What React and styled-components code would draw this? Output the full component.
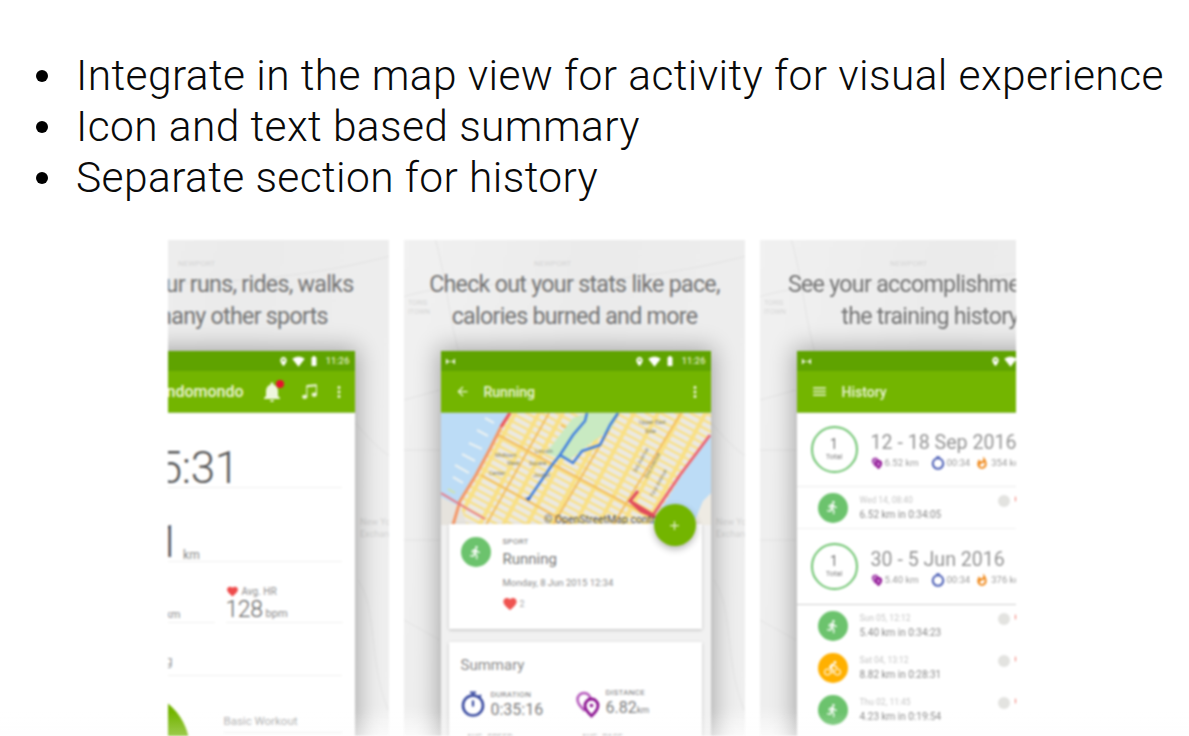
import React from 'react';
import styled, { createGlobalStyle } from 'styled-components';
import {
  MdLocationOn, MdSignalWifi4Bar, MdBatteryFull, MdNotifications, MdMoreVert, MdArrowBack,
  MdMenu, MdAdd, MdFavorite, MdDirectionsRun, MdDirectionsBike, MdWhatshot,
} from 'react-icons/md';
import { BsMusicNoteBeamed } from 'react-icons/bs';

const Global = createGlobalStyle`
  html, body { margin: 0; padding: 0; background: #fff; }
  body { font-family: Roboto, "Liberation Sans", sans-serif; }
`;

const Page = styled.div`
  position: relative; width: 1189px; height: 736px; overflow: hidden; background: #fff;
`;
const Bullets = styled.ul`
  list-style: none; margin: 0; padding: 50px 0 0 36px;
  font: 300 42.5px/51px Roboto, "Liberation Sans", sans-serif; color: #0a0a0a;
`;
const Bullet = styled.li`
  display: flex; align-items: center; gap: 28px; white-space: nowrap; letter-spacing: 0.4px; height: 51px;
  &::before { content: ''; width: 12px; height: 12px; border-radius: 50%; background: #000; flex: none; }
`;
const Strip = styled.div`
  width: 848px; height: 496px; margin: 37px 0 0 168px; overflow: hidden; filter: blur(0.9px);
`;
const Shots = styled.div`
  display: flex; gap: 15px; margin-left: -120px; width: 1200px; height: 100%;
`;
const Shot = styled.section`
  position: relative; flex: none; width: 341px; height: 100%; display: flex; flex-direction: column;
  align-items: center; overflow: hidden;
  background:
    linear-gradient(to top, #fafafa 0, rgba(250,250,250,0) 30px),
    linear-gradient(100deg, #f1f1f1 0%, #ebebeb 45%, #efefef 100%);
`;
const Backdrop = styled.svg`
  position: absolute; inset: 0; width: 100%; height: 100%;
`;
const Caption = styled.h2`
  position: relative; margin: 28px 0 0; font: 400 24.5px/32px Roboto, sans-serif; letter-spacing: -0.75px;
  color: #737373; text-align: center; white-space: nowrap; transform: scaleX(.947);
`;
const Phone = styled.div`
  position: relative; flex: none; width: 270px; height: 400px; margin: 19px 0 0 2px; display: flex; flex-direction: column;
  overflow: hidden; background: ${p => p.$bg || '#fff'}; box-shadow: 0 0 22px 3px rgba(0,0,0,.3);
`;
const StatusBar = styled.div`
  flex: none; height: 20px; display: flex; align-items: center; padding: 0 5px; gap: 3px;
  background: #5fa300; color: #fff; font: 500 9px/1 Roboto, sans-serif; letter-spacing: .2px;
`;
const StatusGap = styled.span`flex: 1;`;
const StatusTime = styled.span`margin-left: 3px; color: #e3f0c9;`;
const AppBar = styled.div`
  flex: none; height: 42px; display: flex; align-items: center; background: #73b500;
  border-bottom: 1px solid #8fbc50; box-sizing: border-box; padding: 0 7px 0 ${p => p.$pad || 14}px; gap: ${p => p.$gap || 14}px;
  font: 500 14px/1 Roboto, sans-serif; color: #eef6dd;
`;
const BarTitle = styled.span`flex: 1; white-space: nowrap; font-size: ${p => p.$size || 14}px; margin-left: ${p => p.$ml || 0}px;`;
const Bell = styled.span`position: relative; display: flex; margin-right: 5px;`;
const BellDot = styled.i`
  position: absolute; top: 0; right: 0; width: 8px; height: 8px; border-radius: 50%; background: #e8112d;
`;

/* first phone */
const Row = styled.div`
  flex: none; box-sizing: border-box; height: ${p => p.$h}px; margin-right: 13px; display: flex; align-items: flex-end;
  border-bottom: 1px solid #f1f1ef; padding-left: ${p => p.$pl || 0}px; color: #6f6f6f; white-space: nowrap;
`;
const Big = styled.span`font: 300 44px/38px Roboto, sans-serif; letter-spacing: -.3px; color: #555;`;
const Unit = styled.span`font: 400 12px/12px Roboto, sans-serif; margin-left: 3px; color: #888;`;
const Cols = styled.div`
  flex: none; box-sizing: border-box; display: grid; grid-template-columns: 130px 117px; column-gap: 11px; height: 61px; margin-right: 13px;
`;
const Col = styled.div`
  display: flex; flex-direction: column; justify-content: flex-end; align-items: ${p => p.$end ? 'flex-end' : 'flex-start'};
  border-bottom: 1px solid #f1f1ef; padding-right: ${p => p.$end ? 34 : 0}px; color: #777; white-space: nowrap;
`;
const HrLabel = styled.div`display: flex; align-items: center; gap: 3px; font: 400 10px/12px Roboto, sans-serif; color: #8c8c8c;`;
const HrValue = styled.div`font: 300 23px/24px Roboto, sans-serif; letter-spacing: -.4px; color: #666; display:flex; align-items:baseline; gap:3px;`;
const Small = styled.span`font: 400 11px/14px Roboto, sans-serif; letter-spacing: 0; color: #888;`;
const TextRow = styled.div`
  flex: none; box-sizing: border-box; height: 53px; margin-right: 13px; border-bottom: 1px solid #f1f1ef;
  display: flex; align-items: flex-end; padding-bottom: 6px; color: #999; font: 400 13px/16px Roboto, sans-serif;
`;
const RightAlign = styled.span`width: 88px; text-align: right;`;
const GaugeRow = styled.div`flex: none; display: flex; gap: 34px; margin-left: -15px; padding-top: 14px;`;
const Gauge = styled.div`flex: none; width: 120px; height: 120px; border-radius: 50%; background: #73b500;`;
const Workout = styled.div`
  flex: 1; height: 30px; margin: 13px 13px 0 0; box-sizing: border-box; padding-top: 10px;
  border-bottom: 1px solid #eee; font: 400 11.5px/16px Roboto, sans-serif; color: #aaa; white-space: nowrap;
`;

/* second phone */
const Map = styled.svg`flex: none; display: block; width: 270px; height: 112px;`;
const CardStack = styled.div`
  flex: none; display: flex; flex-direction: column; gap: 13px; padding: 0 9px 0 8px; margin-top: -1px; position: relative;
`;
const Card = styled.div`
  background: #fff; box-shadow: 0 1px 3px rgba(0,0,0,.22); padding: ${p => p.$pad};
  height: ${p => p.$h}px; box-sizing: border-box; flex: none;
`;
const Sport = styled.div`display: flex; gap: 12px;`;
const Disc = styled.span`
  flex: none; display: flex; align-items: center; justify-content: center; width: 30px; height: 30px;
  border-radius: 50%; background: ${p => p.$c || '#6cc36d'}; color: #fff;
`;
const TinyLabel = styled.div`font: 400 8px/10px Roboto, sans-serif; letter-spacing: .3px; color: #777; white-space: nowrap;`;
const CardTitle = styled.div`font: 400 15px/18px Roboto, sans-serif; color: #777; margin-top: 3px;`;
const CardDate = styled.div`font: 400 9.5px/12px Roboto, sans-serif; color: #8c8c8c; margin-top: 9px; white-space: nowrap;`;
const Likes = styled.div`display: flex; align-items: center; gap: 2px; margin-top: 7px; font: 400 9px/16px Roboto, sans-serif; color: #aaa; margin-left: -1px;`;
const Summary = styled.div`font: 400 15px/18px Roboto, sans-serif; color: #8a8a8a;`;
const Stats = styled.div`display: grid; grid-template-columns: 115px 115px; row-gap: 12px; margin-top: 14px;`;
const Stat = styled.div`display: flex; gap: 6px; align-items: center;`;
const StatIcon = styled.svg`flex: none; width: 24px; height: 28px;`;
const StatValue = styled.div`font: 400 16px/19px Roboto, sans-serif; color: #7d7d7d; white-space: nowrap;`;
const StatUnit = styled.span`font-size: 9px;`;
const Fab = styled.div`
  position: absolute; left: 213px; top: 153px; width: 42px; height: 42px; border-radius: 50%;
  background: #73b500; color: #e8f3d4; display: flex; align-items: center; justify-content: center;
  box-shadow: 0 3px 7px rgba(0,0,0,.3);
`;

/* third phone */
const Week = styled.div`
  flex: none; box-sizing: border-box; height: ${p => p.$h}px; display: flex; align-items: center; gap: 13px; padding-left: 14px;
  border-bottom: 1px solid ${p => p.$strong ? '#cfcfcf' : '#ececec'};
`;
const Ring = styled.div`
  flex: none; box-sizing: border-box; width: 47px; height: 47px; border-radius: 50%; border: 2.5px solid #6cc36d;
  display: flex; flex-direction: column; align-items: center; justify-content: center; color: #777;
`;
const RingNum = styled.span`font: 400 14px/15px Roboto, sans-serif;`;
const RingLabel = styled.span`font: 400 7.5px/10px Roboto, sans-serif;`;
const WeekTitle = styled.div`font: 400 19.6px/25px Roboto, sans-serif; color: #949494; white-space: nowrap;`;
const Meta = styled.div`display: flex; align-items: center; gap: 2px; height: 14px; padding-top: 1px; font: 400 9.5px/13px Roboto, sans-serif; color: #9a9a9a; white-space: nowrap;`;
const MetaIcon = styled.svg`flex: none; width: ${p => p.$s || 12}px; height: ${p => p.$s || 12}px; margin-left: ${p => p.$ml || 0}px;`;
const Entry = styled.div`
  flex: none; box-sizing: border-box; height: 42px; display: flex; align-items: center; gap: 12px; padding-left: 21px;
  border-bottom: ${p => p.$line ? '1px solid #f1f1f1' : '0'};
`;
const EntryText = styled.div`flex: none; width: 126px; white-space: nowrap;`;
const EntryDate = styled.div`font: 400 8.5px/13px Roboto, sans-serif; color: #c6c6c6;`;
const EntryInfo = styled.div`font: 400 10px/15px Roboto, sans-serif; color: #8a8a8a;`;
const EntryDots = styled.div`display: flex; gap: 5px; align-self: flex-start; margin-top: 8px;`;
const Dot = styled.i`flex: none; width: ${p => p.$s}px; height: ${p => p.$s}px; border-radius: 50%; background: ${p => p.$c};`;

const Fade = styled.div`
  position: absolute; left: 0; right: 0; bottom: 0; height: 24px;
  background: linear-gradient(to bottom, rgba(255,255,255,0), rgba(252,252,252,.3));
`;

const BowTie = () => (
  <svg width="9" height="7" viewBox="0 0 9 7" fill="#fff"><path d="M0 0.5 3 3.5 0 6.5ZM9 0.5 6 3.5 9 6.5ZM3.5 3h2v1h-2Z" /></svg>
);
const Status = () => (
  <StatusBar>
    <BowTie />
    <StatusGap />
    <MdLocationOn size={11} />
    <MdSignalWifi4Bar size={13} />
    <MdBatteryFull size={12} />
    <StatusTime>11:26</StatusTime>
  </StatusBar>
);

const Pins = (props) => (
  <StatIcon viewBox="0 0 24 28" {...props}>
    <path d="M8 3a6.5 6.5 0 0 0-6.5 6.5C1.500 14 8 20 8 20s6.500-6 6.500-10.500A6.500 6.500 0 0 0 8 3Z" fill="none" stroke="#b65bbd" strokeWidth="2.6" />
    <path d="M15.500 9a6.500 6.500 0 0 0-6.500 6.500c0 4.500 6.500 10.500 6.500 10.500S22 20 22 15.500A6.500 6.500 0 0 0 15.500 9Z" fill="#fff" stroke="#8a0e8f" strokeWidth="2.800" />
    <circle cx="15.500" cy="15.500" r="1.800" fill="#8a0e8f" />
  </StatIcon>
);
const Watch = (props) => (
  <StatIcon viewBox="0 0 24 28" {...props}>
    <circle cx="12" cy="15.500" r="10" fill="none" stroke="#36489f" strokeWidth="2.600" />
    <path d="M9 2.500h6M12 2.500v3M20 5l-2.500 2.500" fill="none" stroke="#36489f" strokeWidth="2" />
    <path d="M12 10.500v6" stroke="#36489f" strokeWidth="2.200" />
  </StatIcon>
);
const MiniPins = () => (
  <MetaIcon viewBox="0 0 24 28">
    <path d="M8 3a6.500 6.500 0 0 0-6.500 6.500C1.500 14 8 20 8 20s6.500-6 6.500-10.500A6.500 6.500 0 0 0 8 3Z" fill="#c58ccb" stroke="#a84ab0" strokeWidth="4" />
    <path d="M15.500 9A6.500 6.500 0 0 0 9 15.500C9 20 15.500 26 15.500 26S22 20 22 15.500A6.500 6.500 0 0 0 15.500 9Z" fill="#c06bc6" stroke="#8a0e8f" strokeWidth="4" />
  </MetaIcon>
);
const MiniWatch = () => (
  <MetaIcon viewBox="0 0 24 24" $ml={10} $s={14}>
    <circle cx="12" cy="13" r="9" fill="none" stroke="#4a5db5" strokeWidth="3.500" />
    <path d="M9 2h6" stroke="#4a5db5" strokeWidth="3" />
  </MetaIcon>
);
const MiniFlame = () => <MdWhatshot size={14} color="#f08a1d" style={{ marginLeft: 3 }} />;

const Faint = () => (
  <Backdrop viewBox="0 0 341 496" preserveAspectRatio="none">
    <g fill="none" stroke="#dedede" strokeWidth="1" opacity=".7">
      <path d="M-10 60 C70 30 180 60 350 14" />
      <path d="M30 -5 C50 60 40 110 90 190" />
      <path d="M240 120 C290 150 320 210 350 220" />
      <path d="M0 160 L36 150" /><path d="M310 340 C330 370 320 420 340 470" />
      <path d="M0 210h36M0 300h36M0 380l36 20" />
    </g>
    <g fill="#d4d4d4" fontFamily="Roboto, sans-serif" fontSize="8">
      <text x="130" y="26">NEWPORT</text>
      <text x="4" y="65" fontSize="7">TORIS</text>
      <text x="4" y="74" fontSize="7">ITOWN</text>
      <text x="312" y="285" fontSize="9">New York</text>
      <text x="312" y="297" fontSize="9">Exchange</text>
    </g>
  </Backdrop>
);

const avenues = [
  [45, 112, 108, 0], [112, 112, 178, 0], [172, 112, 240, 0],
];
const streets = [
  [50, 18, 210, 104], [40, 62, 130, 112], [120, 12, 150, 28],
];
const CityMap = () => (
  <Map viewBox="0 0 270 112">
    <defs>
      <pattern id="blocks" width="21" height="7" patternUnits="userSpaceOnUse" patternTransform="rotate(28) translate(3 2)">
        <rect width="21" height="7" fill="#f9e083" />
        <rect x="1.500" y="1" width="17" height="4.800" fill="#ece9e2" />
      </pattern>
    </defs>
    <rect width="270" height="112" fill="url(#blocks)" />
    <g stroke="#f4bf5e" strokeWidth="2">
      {avenues.map(([a, b, c, d]) => <line key={a} x1={a} y1={b} x2={c} y2={d} />)}
      {streets.map(([a, b, c, d]) => <line key={a} x1={a} y1={b} x2={c} y2={d} />)}
    </g>
    <path d="M105 40 132 5 146 0 178 0 170 16 150 30 128 47 118 45Z" fill="#c9eac2" />
    <path d="M0 0H69L52 28 26 78 8 104 0 88Z" fill="#bcdcf6" />
    <path d="M270 22V112H210L239 65Z" fill="#bcdcf6" />
    <path d="M252 112 262 88 270 80V112Z" fill="#eeebe3" />
    <path d="M0 84 20 94 26 112H0Z" fill="#e6e3dd" />
    <g stroke="#eaf1f2" strokeWidth="2.200">
      <path d="M53 10 44 5M47 23 36 17M41 36 28 30M34 48 21 41M28 60 14 52M22 70 12 64" />
    </g>
    <path d="M14 80 7 76" stroke="#cfe3a9" strokeWidth="2" />
    <path d="M69 0 60 14" fill="none" stroke="#ee5358" strokeWidth="3.200" />
    <path d="M60 14 50 34 35 62 19 88 12 112" fill="none" stroke="#f59767" strokeWidth="3" />
    <path d="M0 80 30 98 44 106" fill="none" stroke="#e77b86" strokeWidth="2" />
    <path d="M269 22 239 62 212 102" fill="none" stroke="#ec6272" strokeWidth="2.800" />
    <path d="M212 102 189 88 197 78M189 88 200 98 214 104" fill="none" stroke="#e14a5c" strokeWidth="3" />
    <path d="M87 87 111 52 119 42 132 22 144 8 146 0M119 42 132 50 141 38 159 32 169 12 177 0" fill="none" stroke="#3d7de0" strokeWidth="2.400" />
    <path d="M84 85l6-1-2 4Z" fill="#2b60c4" />
    <g fill="#7e7e70" fontFamily="Roboto, sans-serif" fontSize="5.500">
      <text x="54" y="44">Midtown</text>
      <text x="94" y="40">Lincoln</text>
      <text x="66" y="52">West</text>
      <text x="88" y="52">Square</text>
      <text x="48" y="62">Center</text>
      <text x="92" y="64">Jordan</text>
      <text x="198" y="11">Upper East</text>
      <text x="204" y="20">Side</text>
      <text transform="translate(195 60) rotate(-62)">3rd Avenue</text>
      <text transform="translate(206 66) rotate(-62)">2nd Avenue</text>
      <text transform="translate(212 84) rotate(-62)">First Avenue</text>
    </g>
    <text x="103" y="110" fill="#555" fontFamily="Roboto, sans-serif" fontSize="10.500">© OpenStreetMap contributors</text>
  </Map>
);

const Runner = ({ size = 15 }) => <MdDirectionsRun size={size} />;

const week1 = [{ d: 'Wed 14, 08:40', t: '6.52 km in 0:34:05', c: '#6cc36d', line: true }];
const week2 = [
  { d: 'Sun 05, 12:12', t: '5.40 km in 0:34:23', c: '#6cc36d' },
  { d: 'Sat 04, 13:12', t: '8.82 km in 0:28:31', c: '#ffb000', bike: true },
  { d: 'Thu 02, 11:45', t: '4.23 km in 0:19:54', c: '#6cc36d' },
];

const Entries = ({ items }) => items.map((e) => (
  <Entry key={e.d} $line={e.line}>
    <Disc $c={e.c}>{e.bike ? <MdDirectionsBike size={17} /> : <Runner />}</Disc>
    <EntryText>
      <EntryDate>{e.d}</EntryDate>
      <EntryInfo>{e.t}</EntryInfo>
    </EntryText>
    <EntryDots>
      <Dot $s={12} $c="#e3e3e0" />
      <Dot $s={8} $c="#ef6a5e" />
    </EntryDots>
  </Entry>
));

const WeekHead = ({ h, strong, title, km, time, kcal }) => (
  <Week $h={h} $strong={strong}>
    <Ring><RingNum>1</RingNum><RingLabel>Total</RingLabel></Ring>
    <div>
      <WeekTitle>{title}</WeekTitle>
      <Meta><MiniPins />{km}<MiniWatch />{time}<MiniFlame />{kcal}</Meta>
    </div>
  </Week>
);

export default function App() {
  return (
    <Page>
      <Global />
      <Bullets>
        <Bullet>Integrate in the map view for activity for visual experience</Bullet>
        <Bullet>Icon and text based summary</Bullet>
        <Bullet>Separate section for history</Bullet>
      </Bullets>
      <Strip>
        <Shots>
          <Shot>
            <Faint />
            <Caption>Track your runs, rides, walks<br />and many other sports</Caption>
            <Phone>
              <Status />
              <AppBar $gap={12}>
                <MdMenu size={18} />
                <BarTitle $size={16} $ml={29}>Endomondo</BarTitle>
                <Bell><MdNotifications size={24} /><BellDot /></Bell>
                <BsMusicNoteBeamed size={17} />
                <MdMoreVert size={18} />
              </AppBar>
              <Row $h={75} $pl={16}><Big>0:35:31</Big></Row>
              <Row $h={74} $pl={13}><Big>6.51</Big><Unit>km</Unit></Row>
              <Cols>
                <Col $end><Small>5:14 min/km</Small></Col>
                <Col>
                  <HrLabel><MdFavorite size={13} color="#ee4b4b" />Avg. HR</HrLabel>
                  <HrValue>128<Small>bpm</Small></HrValue>
                </Col>
              </Cols>
              <TextRow><RightAlign>72 kg</RightAlign></TextRow>
              <GaugeRow>
                <Gauge />
                <Workout>Basic Workout</Workout>
              </GaugeRow>
            </Phone>
          </Shot>

          <Shot>
            <Faint />
            <Caption>Check out your stats like pace,<br />calories burned and more</Caption>
            <Phone $bg="#f1f1f1">
              <Status />
              <AppBar>
                <MdArrowBack size={15} />
                <BarTitle>Running</BarTitle>
                <MdMoreVert size={18} />
              </AppBar>
              <CityMap />
              <CardStack>
                <Card $h={105} $pad="13px 12px">
                  <Sport>
                    <Disc><Runner /></Disc>
                    <div>
                      <TinyLabel>SPORT</TinyLabel>
                      <CardTitle>Running</CardTitle>
                      <CardDate>Monday, 8 Jun 2015 12:34</CardDate>
                      <Likes><MdFavorite size={16} color="#ef5350" />2</Likes>
                    </div>
                  </Sport>
                </Card>
                <Card $h={120} $pad="14px 12px">
                  <Summary>Summary</Summary>
                  <Stats>
                    <Stat><Watch /><div><TinyLabel>DURATION</TinyLabel><StatValue>0:35:16</StatValue></div></Stat>
                    <Stat><Pins /><div><TinyLabel>DISTANCE</TinyLabel><StatValue>6.82<StatUnit>km</StatUnit></StatValue></div></Stat>
                    <Stat><div /><TinyLabel>AVG. SPEED</TinyLabel></Stat>
                    <Stat><div /><TinyLabel>AVG. PACE</TinyLabel></Stat>
                  </Stats>
                </Card>
              </CardStack>
              <Fab><MdAdd size={15} /></Fab>
            </Phone>
          </Shot>

          <Shot>
            <Faint />
            <Caption>See your accomplishments in<br />the training history</Caption>
            <Phone>
              <Status />
              <AppBar>
                <MdMenu size={17} />
                <BarTitle>History</BarTitle>
              </AppBar>
              <WeekHead h={74} title="12 - 18 Sep 2016" km="6.52 km" time="00:34" kcal="354 kcal" />
              <Entries items={week1} />
              <WeekHead h={76} strong title="30 - 5 Jun 2016" km="5.40 km" time="00:34" kcal="376 kcal" />
              <Entries items={week2} />
            </Phone>
          </Shot>
        </Shots>
      </Strip>
      <Fade />
    </Page>
  );
}
